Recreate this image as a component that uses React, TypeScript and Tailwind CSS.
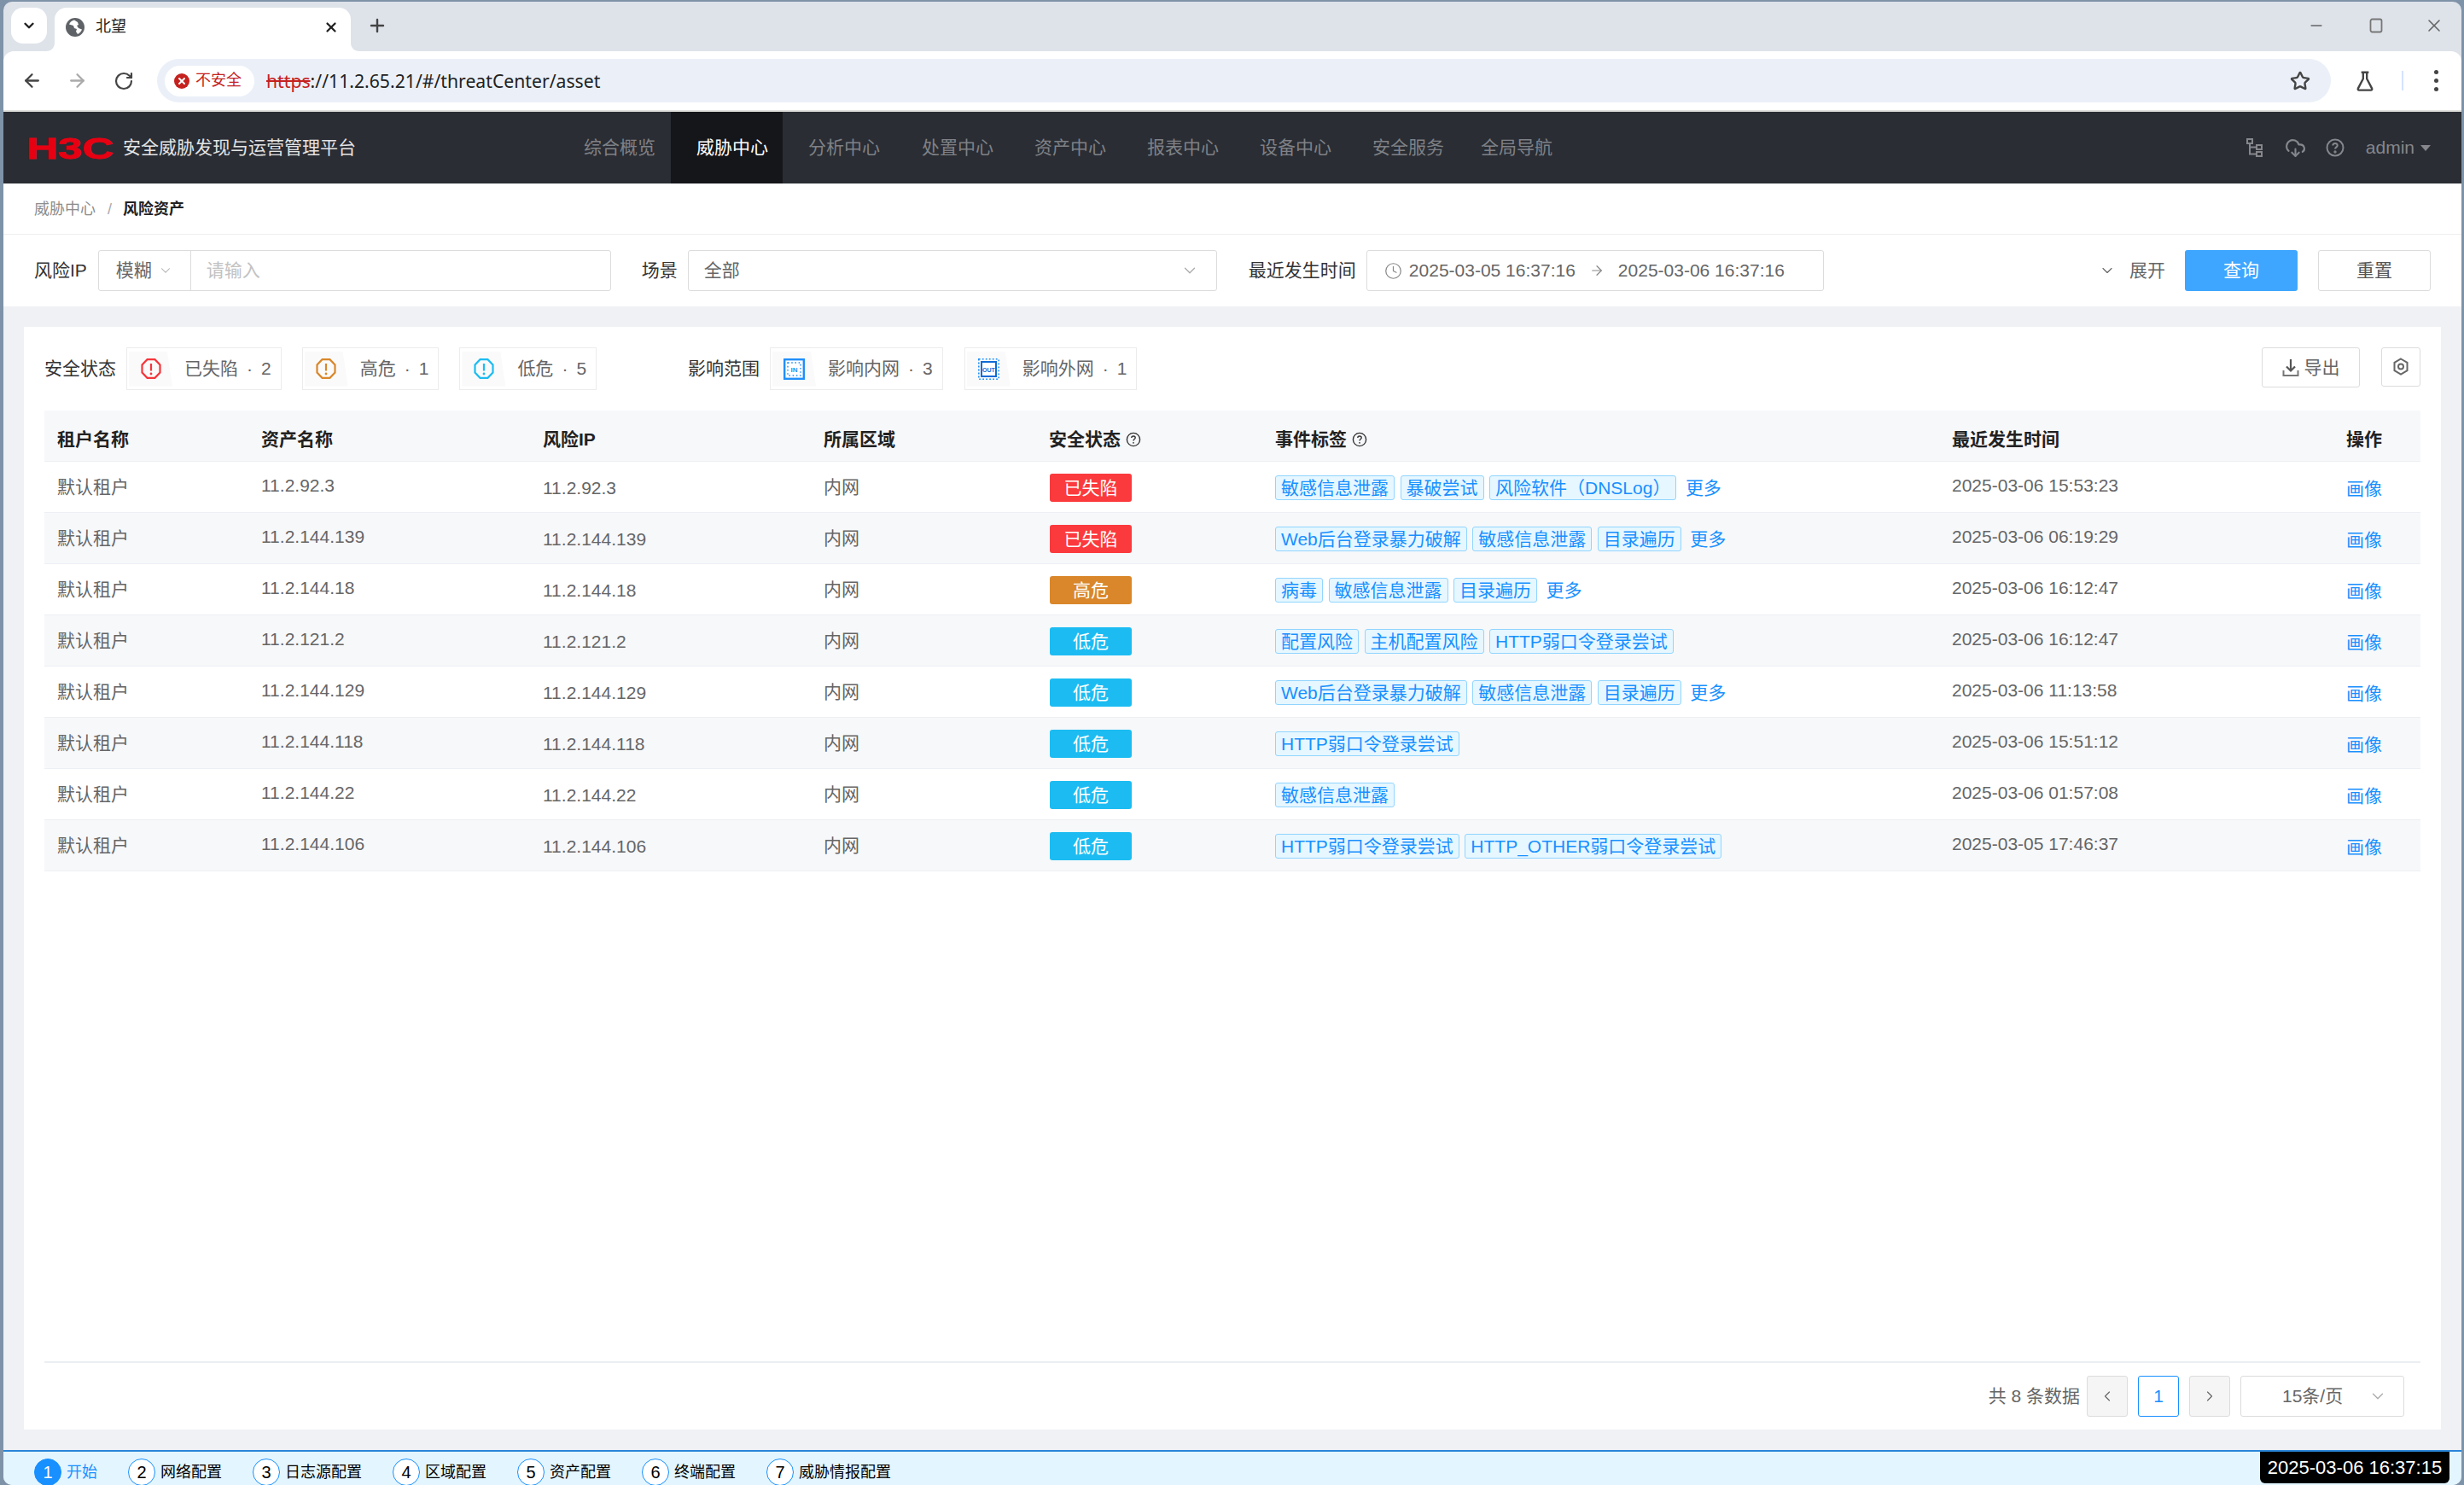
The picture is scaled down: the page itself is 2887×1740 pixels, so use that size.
import React from "react";
import { ArrowLeft, ArrowRight, RotateCw, Star, X, Plus, Minus, ChevronDown, ChevronLeft, ChevronRight, Clock, CloudDownload } from "lucide-react";

const navs: [string, string][] = [
  ["综合概览", "w-[132px]"],
  ["威胁中心", "w-[131px] bg-[#15161a] text-white"],
  ["分析中心", "w-[133px]"],
  ["处置中心", "w-[132px]"],
  ["资产中心", "w-[132px]"],
  ["报表中心", "w-[132px]"],
  ["设备中心", "w-[132px]"],
  ["安全服务", "w-[127px]"],
  ["全局导航", "w-[132px]"],
];

type Row = { a: string; s: string; tags: string[]; more: boolean; t: string };
const WEB = "Web后台登录暴力破解";
const SEN = "敏感信息泄露";
const DIR = "目录遍历";
const WK = "HTTP弱口令登录尝试";
const rows: Row[] = [
  { a: "11.2.92.3", s: "已失陷", tags: [SEN, "暴破尝试", "风险软件（DNSLog）"], more: true, t: "2025-03-06 15:53:23" },
  { a: "11.2.144.139", s: "已失陷", tags: [WEB, SEN, DIR], more: true, t: "2025-03-06 06:19:29" },
  { a: "11.2.144.18", s: "高危", tags: ["病毒", SEN, DIR], more: true, t: "2025-03-06 16:12:47" },
  { a: "11.2.121.2", s: "低危", tags: ["配置风险", "主机配置风险", WK], more: false, t: "2025-03-06 16:12:47" },
  { a: "11.2.144.129", s: "低危", tags: [WEB, SEN, DIR], more: true, t: "2025-03-06 11:13:58" },
  { a: "11.2.144.118", s: "低危", tags: [WK], more: false, t: "2025-03-06 15:51:12" },
  { a: "11.2.144.22", s: "低危", tags: [SEN], more: false, t: "2025-03-06 01:57:08" },
  { a: "11.2.144.106", s: "低危", tags: [WK, "HTTP_OTHER弱口令登录尝试"], more: false, t: "2025-03-05 17:46:37" },
];

const badge: Record<string, string> = {
  已失陷: "bg-[#fb3a3d]",
  高危: "bg-[#d9872a]",
  低危: "bg-[#1cbcf2]",
};

const GRID = "grid grid-cols-[239px_330px_329px_264px_265px_793px_462px_102px]";

function Octagon({ color }: { color: string }) {
  return (
    <svg width="24" height="24" viewBox="0 0 24 24" fill="none">
      <path d="M7.5 1.2h9l6 6.3v9l-6 6.3h-9l-6-6.3v-9z" stroke={color} strokeWidth="2.2" />
      <path d="M12 6v8.5" stroke={color} strokeWidth="2.2" />
      <circle cx="12" cy="18" r="1.4" fill={color} />
    </svg>
  );
}

function NetIn() {
  return (
    <svg width="25" height="25" viewBox="0 0 25 25" fill="none">
      <rect x="1.2" y="1.2" width="22.6" height="22.6" fill="#fff" stroke="#1f8ffb" strokeWidth="2.4" />
      <rect x="5" y="5" width="15" height="15" stroke="#1f8ffb" strokeWidth="1.4" strokeDasharray="1.6 2.6" />
      <text x="12.5" y="15.500" textAnchor="middle" fontSize="8" fontWeight="700" fill="#1f8ffb" fontFamily="Liberation Sans">IN</text>
    </svg>
  );
}

function NetOut() {
  return (
    <svg width="25" height="25" viewBox="0 0 25 25" fill="none">
      <rect x="0.8" y="0.8" width="23.4" height="23.4" stroke="#1f8ffb" strokeWidth="1.6" strokeDasharray="1.8 2.2" />
      <rect x="4" y="4" width="17" height="17" fill="#fff" stroke="#0f6ad6" strokeWidth="2" />
      <text x="12.5" y="15.500" textAnchor="middle" fontSize="7" fontWeight="700" fill="#0f6ad6" fontFamily="Liberation Sans">OUT</text>
    </svg>
  );
}

function Stat({ icon, label, n }: { icon: React.ReactNode; label: string; n: number }) {
  return (
    <div className="flex h-[50px] items-center border border-[#ececec] pl-[2px] pr-[11px] text-[21px] text-[#666]">
      <div className="flex h-[41px] w-[51px] items-center justify-center bg-[#fafafa] [clip-path:polygon(0_0,88%_0,100%_100%,0_100%)]">{icon}</div>
      <span className="ml-[14px]">{label}</span>
      <span className="mx-[10px]">·</span>
      <span>{n}</span>
    </div>
  );
}

function Help() {
  return (
    <svg width="18" height="18" viewBox="0 0 18 18" fill="none" className="ml-[6px]">
      <circle cx="9" cy="9" r="7.6" stroke="#333" strokeWidth="1.4" />
      <path d="M6.8 7.1c0-1.3 1-2.1 2.2-2.1s2.2.8 2.2 2c0 1.5-2.2 1.7-2.2 3.4" stroke="#333" strokeWidth="1.4" />
      <circle cx="9" cy="12.8" r=".9" fill="#333" />
    </svg>
  );
}

export default function App() {
  return (
    <div className="flex h-[1740px] w-[2887px] flex-col overflow-hidden bg-[#7e93a8] pl-[4px] pr-[3px] pt-[2px] font-[Liberation_Sans,Noto_Sans_CJK_SC,sans-serif]">
      <div className="flex h-[1738px] flex-col overflow-hidden rounded-t-[10px] rounded-b-[10px] bg-[#dee3ea]">
        {/* tab strip */}
        <div className="flex h-[58px] shrink-0 items-start pl-[9px] pt-[7px]">
          <div className="flex h-[42px] w-[42px] items-center justify-center rounded-[14px] bg-white">
            <ChevronDown size={18} strokeWidth={3.2} className="text-[#222]" />
          </div>
          <div className="relative ml-[9px] flex h-[51px] w-[347px] items-center rounded-t-[14px] bg-white pb-[6px] pl-[13px]">
            <svg className="absolute bottom-0 left-[-10px]" width="10" height="10" viewBox="0 0 10 10"><path d="M10 0v10H0c6 0 10-4 10-10z" fill="#fff" /></svg>
            <svg className="absolute bottom-0 right-[-10px]" width="10" height="10" viewBox="0 0 10 10"><path d="M0 0v10h10C4 10 0 6 0 0z" fill="#fff" /></svg>
            <svg width="22" height="22" viewBox="0 0 22 22">
              <circle cx="11" cy="11" r="11" fill="#5f6368" />
              <path d="M10 2.500c-3 .5-5 2.500-6 5l5 1.500 1 3 3 1-1 3 2 3c2.500-1 4-3 5-5.500l-4-1.500-2-3 2-1-1-3z" fill="#fff" />
            </svg>
            <span className="ml-[13px] text-[18px] text-[#222]">北望</span>
            <X size={18} strokeWidth={3} className="ml-auto mr-[14px] text-[#222]" />
          </div>
          <Plus size={24} strokeWidth={2.4} className="ml-[19px] mt-[9px] text-[#444]" />
          <div className="ml-auto mr-[20px] mt-[9px] flex items-center gap-[46px] text-[#666]">
            <Minus size={20} strokeWidth={2} className="mr-[4px]" />
            <svg width="20" height="20" viewBox="0 0 20 20" fill="none"><rect x="3.5" y="2.5" width="13" height="15" rx="2" stroke="#777" strokeWidth="1.8" /></svg>
            <X size={24} strokeWidth={1.6} />
          </div>
        </div>
        {/* toolbar */}
        <div className="flex h-[71px] shrink-0 items-center rounded-t-[12px] border-b-2 border-[#dfdfdb] bg-white pl-[21px]">
          <ArrowLeft size={25} strokeWidth={2.2} className="text-[#444]" />
          <ArrowRight size={25} strokeWidth={2.2} className="ml-[28px] text-[#aaa]" />
          <RotateCw size={24} strokeWidth={2.2} className="ml-[30px] text-[#444]" />
          <div className="ml-[27px] flex h-[51px] flex-1 items-center rounded-full bg-[#ebf0f8] pl-[9px] pr-[24px]">
            <div className="flex h-[36px] w-[105px] items-center rounded-full bg-white pl-[11px]">
              <span className="flex h-[18px] w-[18px] items-center justify-center rounded-full bg-[#c5221f]">
                <X size={12} strokeWidth={4} className="text-white" />
              </span>
              <span className="ml-[7px] text-[18px] text-[#c5221f]">不安全</span>
            </div>
            <div className="ml-[14px] font-[Noto_Sans,sans-serif] text-[21.2px] text-[#222]">
              <span className="text-[#c5221f] line-through">https</span>://11.2.65.21/#/threatCenter/asset
            </div>
            <Star size={24} strokeWidth={2.4} className="ml-auto text-[#444]" />
          </div>
          <div className="flex h-full w-[153px] items-center pl-[27px]">
            <svg width="26" height="26" viewBox="0 0 24 24" fill="none" stroke="#444" strokeWidth="2.2"><path d="M8 2.5h8M10 2.5v7L4.5 20a1.2 1.2 0 0 0 1 1.8h13a1.2 1.2 0 0 0 1-1.8L14 9.500v-7" /></svg>
            <div className="ml-[30px] h-[23px] w-[2px] bg-[#d3e3fd]" />
            <div className="ml-[36px] flex flex-col gap-[5px]">
              <span className="h-[5px] w-[5px] rounded-full bg-[#444]" />
              <span className="h-[5px] w-[5px] rounded-full bg-[#444]" />
              <span className="h-[5px] w-[5px] rounded-full bg-[#444]" />
            </div>
          </div>
        </div>
        {/* app header */}
        <div className="flex h-[84px] shrink-0 items-stretch bg-[#2a2d34] pl-[30px] pr-[36px] text-[21px] text-[#7f8186]">
          <div className="flex w-[98px] items-center">
            <svg width="98" height="44" viewBox="0 0 98 44" className="overflow-visible"><text x="-3" y="34.500" fontSize="35" fontWeight="700" fill="#e60012" stroke="#e60012" strokeWidth="0.8" textLength="102" lengthAdjust="spacingAndGlyphs" fontFamily="Liberation Sans">H3C</text></svg>
          </div>
          <div className="ml-[12px] flex w-[274px] items-center whitespace-nowrap text-[#e4e4e4]">安全威胁发现与运营管理平台</div>
          <div className="ml-[236px] flex">
            {navs.map(([n, c]) => (
              <div key={n} className={`flex items-center pl-[30px] ${c}`}>{n}</div>
            ))}
          </div>
          <div className="ml-auto flex items-center text-[#85878c]">
            <svg width="20" height="22" viewBox="0 0 20 22" fill="none" stroke="#85878c" strokeWidth="2"><rect x="1" y="1" width="6" height="5" /><rect x="12" y="8" width="6" height="5" /><rect x="12" y="16" width="6" height="5" /><path d="M4 6v12.500h8M4 10.500h8" /></svg>
            <CloudDownload size={25} strokeWidth={2} className="ml-[25px]" />
            <svg width="22" height="22" viewBox="0 0 22 22" fill="none" className="ml-[23px]" stroke="#85878c" strokeWidth="2"><circle cx="11" cy="11" r="9.500" /><path d="M8.300 8.500c0-1.600 1.200-2.600 2.700-2.600s2.700 1 2.700 2.500c0 1.900-2.700 2.100-2.700 4.200" /><circle cx="11" cy="16" r=".7" /></svg>
            <span className="ml-[25px]">admin</span>
            <span className="ml-[7px] h-0 w-0 border-x-[6px] border-t-[7px] border-x-transparent border-t-[#85878c]" />
          </div>
        </div>
        {/* breadcrumb */}
        <div className="flex h-[60px] shrink-0 items-center border-b border-[#eee] bg-white pl-[36px] pt-[2px] text-[18px] text-[#8c8c8c]">
          <span>威胁中心</span>
          <span className="ml-[14px] text-[#aaa]">/</span>
          <span className="ml-[13px] font-bold text-[#222]">风险资产</span>
        </div>
        {/* filters */}
        <div className="flex h-[84px] shrink-0 items-start bg-white pl-[36px] pr-[36px] pt-[18px] text-[21px]">
          <span className="flex h-[48px] items-center text-[#333]">风险IP</span>
          <div className="ml-[13px] flex h-[48px] w-[601px] rounded-[3px] border border-[#dcdcdc] text-[#666]">
            <div className="flex w-[108px] items-center border-r border-[#dcdcdc] pl-[20px]">
              模糊<ChevronDown size={18} strokeWidth={1.4} className="ml-[7px] text-[#aaa]" />
            </div>
            <div className="flex items-center pl-[18px] text-[#c2c2c2]">请输入</div>
          </div>
          <span className="ml-[36px] flex h-[48px] items-center text-[#333]">场景</span>
          <div className="ml-[12px] flex h-[48px] w-[620px] items-center justify-between rounded-[3px] border border-[#dcdcdc] pl-[18px] pr-[20px] text-[#666]">
            全部<ChevronDown size={22} strokeWidth={1.4} className="text-[#aaa]" />
          </div>
          <span className="ml-[37px] flex h-[48px] items-center text-[#333]">最近发生时间</span>
          <div className="ml-[12px] flex h-[48px] w-[536px] items-center rounded-[3px] border border-[#dcdcdc] pl-[20px] text-[#666]">
            <Clock size={21} strokeWidth={1.4} className="text-[#888]" />
            <span className="ml-[8px]">2025-03-05 16:37:16</span>
            <ArrowRight size={18} strokeWidth={1.6} className="ml-[16px] text-[#888]" />
            <span className="ml-[16px]">2025-03-06 16:37:16</span>
          </div>
          <div className="ml-auto flex h-[48px] items-center text-[#666]">
            <ChevronDown size={20} strokeWidth={1.4} />
            <span className="ml-[16px]">展开</span>
            <div className="ml-[23px] flex h-[48px] w-[132px] items-center justify-center rounded-[3px] bg-[#3ea6ff] text-white">查询</div>
            <div className="ml-[24px] flex h-[48px] w-[132px] items-center justify-center rounded-[3px] border border-[#dcdcdc] text-[#555]">重置</div>
          </div>
        </div>
        {/* main */}
        <div className="flex min-h-0 flex-1 flex-col bg-[#f0f1f5] px-[24px] pb-[24px] pt-[24px]">
          <div className="flex min-h-0 flex-1 flex-col bg-white px-[24px] pt-[24px]">
            <div className="flex h-[50px] shrink-0 items-center text-[21px]">
              <span className="text-[#333]">安全状态</span>
              <div className="ml-[12px] flex gap-[24px]">
                <Stat icon={<Octagon color="#f5363b" />} label="已失陷" n={2} />
                <Stat icon={<Octagon color="#d9872a" />} label="高危" n={1} />
                <Stat icon={<Octagon color="#1cbcf2" />} label="低危" n={5} />
              </div>
              <span className="ml-[107px] text-[#333]">影响范围</span>
              <div className="ml-[12px] flex gap-[25px]">
                <Stat icon={<NetIn />} label="影响内网" n={3} />
                <Stat icon={<NetOut />} label="影响外网" n={1} />
              </div>
              <div className="ml-auto flex items-start gap-[25px] self-start text-[#666]">
                <div className="flex h-[47px] w-[115px] items-center justify-center rounded-[3px] border border-[#dcdcdc]">
                  <svg width="20" height="22" viewBox="0 0 20 22" fill="none"><path d="M10 1v13M5 9.500l5 5 5-5" stroke="#555" strokeWidth="2.200" /><path d="M1.500 14v6h17v-6" stroke="#777" strokeWidth="2" /></svg>
                  <span className="ml-[6px]">导出</span>
                </div>
                <div className="flex h-[46px] w-[46px] items-center justify-center rounded-[3px] border border-[#dcdcdc]">
                  <svg width="20" height="22" viewBox="0 0 20 22" fill="none" stroke="#666" strokeWidth="2"><path d="M10 1.500l7.500 4.400v9.200L10 19.500l-7.500-4.400V5.900z" /><circle cx="10" cy="10.500" r="3" /></svg>
                </div>
              </div>
            </div>
            {/* table */}
            <div className="mt-[24px] shrink-0">
              <div className={`${GRID} h-[60px] items-center border-b border-[#eceff3] bg-[#f7f8fa] pt-[8px] text-[21px] font-bold text-[#222]`}>
                <div className="pl-[15px]">租户名称</div>
                <div className="pl-[15px]">资产名称</div>
                <div className="pl-[15px]">风险IP</div>
                <div className="pl-[15px]">所属区域</div>
                <div className="flex items-center pl-[15px]">安全状态<Help /></div>
                <div className="flex items-center pl-[15px]">事件标签<Help /></div>
                <div className="pl-[15px]">最近发生时间</div>
                <div className="pl-[15px]">操作</div>
              </div>
              {rows.map((r, i) => (
                <div key={i} className={`${GRID} h-[60px] items-center border-b border-[#eceff3] text-[21px] text-[#666] ${i % 2 ? "bg-[#f7f8fa]" : "bg-white"}`}>
                  <div className="pl-[15px] pt-[1px]">默认租户</div>
                  <div className="pb-[3px] pl-[15px]">{r.a}</div>
                  <div className="pl-[15px] pt-[3px]">{r.a}</div>
                  <div className="pl-[15px] pt-[1px]">内网</div>
                  <div className="pl-[16px] pt-[2px]">
                    <div className={`flex h-[33px] w-[96px] items-center justify-center rounded-[3px] text-white ${badge[r.s]}`}>{r.s}</div>
                  </div>
                  <div className="flex items-center gap-[6.500px] pl-[15px] pt-[2px]">
                    {r.tags.map((t, j) => (
                      <span key={j} className="flex h-[29px] items-center whitespace-nowrap rounded-[3px] border border-[#91d5ff] bg-[#e6f7ff] px-[6px] text-[#1890ff]">{t}</span>
                    ))}
                    {r.more && <span className="ml-[4px] text-[#1890ff]">更多</span>}
                  </div>
                  <div className="pb-[3px] pl-[15px]">{r.t}</div>
                  <div className="pl-[15px] pt-[5px] text-[#1890ff]">画像</div>
                </div>
              ))}
            </div>
            {/* pagination */}
            <div className="mt-auto flex h-[80px] shrink-0 items-start justify-end border-t-2 border-[#ebeef2] pr-[19px] pt-[15px] text-[21px] text-[#666]">
              <span className="flex h-[48px] items-center">共 8 条数据</span>
              <div className="ml-[8px] flex h-[48px] w-[48px] items-center justify-center rounded-[3px] border border-[#dcdcdc] bg-[#f5f5f5]"><ChevronLeft size={20} strokeWidth={1.4} /></div>
              <div className="ml-[12px] flex h-[48px] w-[48px] items-center justify-center rounded-[3px] border border-[#1890ff] text-[#1890ff]">1</div>
              <div className="ml-[12px] flex h-[48px] w-[48px] items-center justify-center rounded-[3px] border border-[#dcdcdc] bg-[#f5f5f5]"><ChevronRight size={20} strokeWidth={1.4} /></div>
              <div className="ml-[12px] flex h-[48px] w-[192px] items-center rounded-[3px] border border-[#dcdcdc] pl-[48px]">
                15条/页<ChevronDown size={22} strokeWidth={1.4} className="ml-[30px] text-[#aaa]" />
              </div>
            </div>
          </div>
        </div>
        {/* guide bar */}
        <div className="relative flex h-[41px] shrink-0 items-start overflow-hidden border-t-2 border-[#2a86d8] bg-[#e3f5fe] pl-[36px] pt-[8px] text-[18px] text-black">
          {["开始", "网络配置", "日志源配置", "区域配置", "资产配置", "终端配置", "威胁情报配置"].map((s, i) => (
            <div key={s} className={`flex h-[32px] items-center ${i ? "ml-[36px]" : ""}`}>
              <span className={`flex h-[32px] w-[32px] shrink-0 items-center justify-center rounded-full border border-[#1890ff] text-[20px] ${i ? "bg-white" : "bg-[#1890ff] text-white"}`}>{i + 1}</span>
              <span className={`ml-[6px] ${i ? "" : "text-[#1890ff]"}`}>{s}</span>
            </div>
          ))}
          <div className="absolute right-[14px] top-0 flex h-[37px] w-[222px] items-center justify-center rounded-b-[6px] bg-black text-[22px] text-white">2025-03-06 16:37:15</div>
        </div>
      </div>
    </div>
  );
}
